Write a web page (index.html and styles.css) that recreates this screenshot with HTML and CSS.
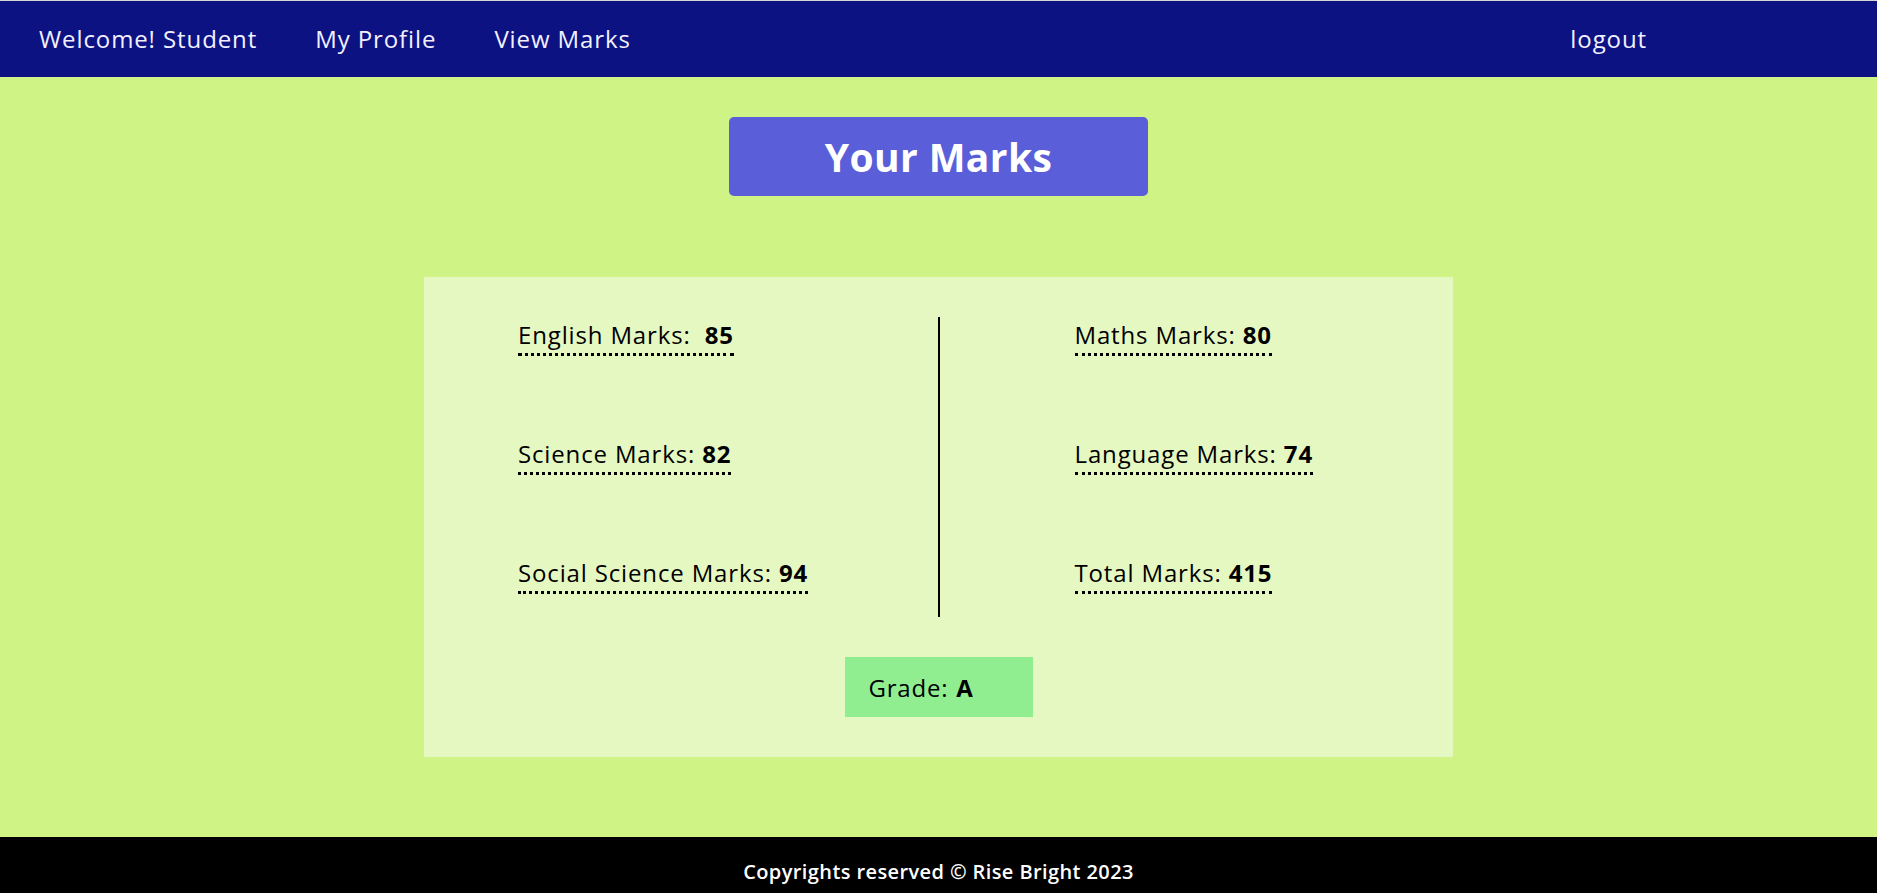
FILE: index.html
```html
<!DOCTYPE html>
<html lang="en">
<head>
<meta charset="utf-8">
<title>Your Marks</title>
<link rel="stylesheet" href="styles.css">
</head>
<body>
<div class="page">
  <nav class="topbar">
    <div class="nav-links">
      <a class="nav-link" href="#">Welcome! Student</a>
      <a class="nav-link" href="#">My Profile</a>
      <a class="nav-link" href="#">View Marks</a>
    </div>
    <a class="nav-link logout" href="#">logout</a>
  </nav>

  <main class="content">
    <h1 class="title">Your Marks</h1>

    <section class="card">
      <div class="columns">
        <div class="col col-left">
          <div class="item"><span class="label">English Marks:&nbsp;</span> <b>85</b></div>
          <div class="item"><span class="label">Science Marks:</span> <b>82</b></div>
          <div class="item"><span class="label">Social Science Marks:</span> <b>94</b></div>
        </div>
        <div class="divider"></div>
        <div class="col col-right">
          <div class="item"><span class="label">Maths Marks:</span> <b>80</b></div>
          <div class="item"><span class="label">Language Marks:</span> <b>74</b></div>
          <div class="item"><span class="label">Total Marks:</span> <b>415</b></div>
        </div>
      </div>
      <div class="grade"><span>Grade:</span> <b>A</b></div>
    </section>
  </main>

  <footer class="footer">
    <p class="copy">Copyrights reserved © Rise Bright 2023</p>
  </footer>
</div>
</body>
</html>
```

FILE: styles.css
```css
* { box-sizing: border-box; }

html, body {
  margin: 0;
  padding: 0;
}

body {
  font-family: "Open Sans", "Noto Sans", sans-serif;
  background: #cff384;
  color: #000;
  border-top: 1px solid #d6d6d6;
}

.page {
  display: flex;
  flex-direction: column;
}

.topbar {
  height: 76px;
  background: #0c1282;
  display: flex;
  align-items: center;
  justify-content: space-between;
  padding: 0 230px 0 39px;
}

.nav-links {
  display: flex;
  gap: 58px;
}

.nav-link {
  color: #f2f0ff;
  text-decoration: none;
  font-size: 24px;
  letter-spacing: 0.9px;
  line-height: 32px;
}

.content {
  display: flex;
  flex-direction: column;
  align-items: center;
  padding: 40px 0 80px;
}

.title {
  margin: 0;
  width: 419px;
  height: 79px;
  background: #5a5fd9;
  border-radius: 5px;
  color: #fff;
  font-size: 39px;
  letter-spacing: 0.4px;
  font-weight: 700;
  display: flex;
  align-items: center;
  justify-content: center;
}

.card {
  margin-top: 81px;
  width: 1029px;
  background: #e6f8c1;
  padding: 40px 0 40px;
  display: flex;
  flex-direction: column;
  align-items: center;
}

.columns {
  width: 100%;
  display: grid;
  grid-template-columns: 1fr 2px 1fr;
}

.col {
  display: flex;
  flex-direction: column;
  align-items: flex-start;
  gap: 82px;
  padding-top: 2px;
}

.col-left { padding-left: 94px; }
.col-right { padding-left: 135px; }

.divider {
  width: 2px;
  height: 300px;
  background: #000;
}

.item {
  font-size: 24px;
  letter-spacing: 0.85px;
  line-height: 32px;
  padding-bottom: 2px;
  border-bottom: 3px dotted #000;
  white-space: nowrap;
}

.item b {
  font-weight: 700;
}

.grade {
  margin-top: 40px;
  width: 188px;
  height: 60px;
  background: #90ee90;
  font-size: 24px;
  letter-spacing: 0.8px;
  display: flex;
  align-items: center;
  padding-left: 24px;
  gap: 8px;
}

.footer {
  background: #000;
  height: 90px;
  padding-top: 21px;
}

.copy {
  margin: 0;
  text-align: center;
  color: #fff;
  font-size: 20px;
  letter-spacing: 0.4px;
  font-weight: 600;
  line-height: 28px;
}
```
